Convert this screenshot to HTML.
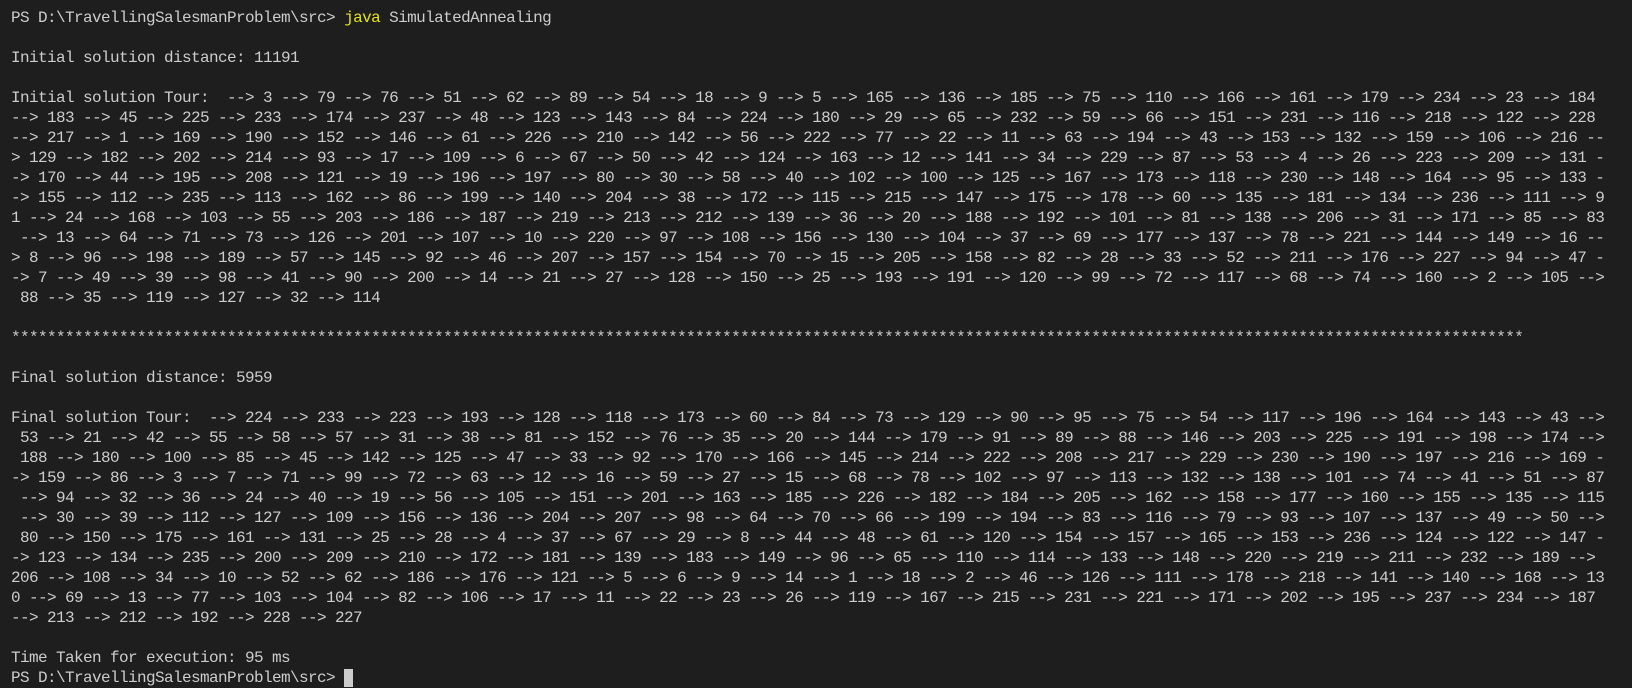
<!DOCTYPE html>
<html>
<head>
<meta charset="utf-8">
<style>
html,body{margin:0;padding:0;background:#1e1e1e;width:1632px;height:670px;overflow:hidden;}
pre{margin:0;position:absolute;left:11px;top:8px;font-family:"Liberation Mono",monospace;font-size:16px;letter-spacing:-0.6px;line-height:20px;color:#cccccc;white-space:pre;}
.y{color:#e5e510;}
.c{display:inline-block;width:9px;height:18px;background:#cccccc;vertical-align:top;margin-top:1px;}
.s{display:inline-block;width:1512px;overflow:hidden;vertical-align:top;height:20px;}
</style>
</head>
<body>
<pre>PS D:\TravellingSalesmanProblem\src&gt; <span class="y">java</span> SimulatedAnnealing

Initial solution distance: 11191

Initial solution Tour:  --&gt; 3 --&gt; 79 --&gt; 76 --&gt; 51 --&gt; 62 --&gt; 89 --&gt; 54 --&gt; 18 --&gt; 9 --&gt; 5 --&gt; 165 --&gt; 136 --&gt; 185 --&gt; 75 --&gt; 110 --&gt; 166 --&gt; 161 --&gt; 179 --&gt; 234 --&gt; 23 --&gt; 184
--&gt; 183 --&gt; 45 --&gt; 225 --&gt; 233 --&gt; 174 --&gt; 237 --&gt; 48 --&gt; 123 --&gt; 143 --&gt; 84 --&gt; 224 --&gt; 180 --&gt; 29 --&gt; 65 --&gt; 232 --&gt; 59 --&gt; 66 --&gt; 151 --&gt; 231 --&gt; 116 --&gt; 218 --&gt; 122 --&gt; 228
--&gt; 217 --&gt; 1 --&gt; 169 --&gt; 190 --&gt; 152 --&gt; 146 --&gt; 61 --&gt; 226 --&gt; 210 --&gt; 142 --&gt; 56 --&gt; 222 --&gt; 77 --&gt; 22 --&gt; 11 --&gt; 63 --&gt; 194 --&gt; 43 --&gt; 153 --&gt; 132 --&gt; 159 --&gt; 106 --&gt; 216 --
&gt; 129 --&gt; 182 --&gt; 202 --&gt; 214 --&gt; 93 --&gt; 17 --&gt; 109 --&gt; 6 --&gt; 67 --&gt; 50 --&gt; 42 --&gt; 124 --&gt; 163 --&gt; 12 --&gt; 141 --&gt; 34 --&gt; 229 --&gt; 87 --&gt; 53 --&gt; 4 --&gt; 26 --&gt; 223 --&gt; 209 --&gt; 131 -
-&gt; 170 --&gt; 44 --&gt; 195 --&gt; 208 --&gt; 121 --&gt; 19 --&gt; 196 --&gt; 197 --&gt; 80 --&gt; 30 --&gt; 58 --&gt; 40 --&gt; 102 --&gt; 100 --&gt; 125 --&gt; 167 --&gt; 173 --&gt; 118 --&gt; 230 --&gt; 148 --&gt; 164 --&gt; 95 --&gt; 133 -
-&gt; 155 --&gt; 112 --&gt; 235 --&gt; 113 --&gt; 162 --&gt; 86 --&gt; 199 --&gt; 140 --&gt; 204 --&gt; 38 --&gt; 172 --&gt; 115 --&gt; 215 --&gt; 147 --&gt; 175 --&gt; 178 --&gt; 60 --&gt; 135 --&gt; 181 --&gt; 134 --&gt; 236 --&gt; 111 --&gt; 9
1 --&gt; 24 --&gt; 168 --&gt; 103 --&gt; 55 --&gt; 203 --&gt; 186 --&gt; 187 --&gt; 219 --&gt; 213 --&gt; 212 --&gt; 139 --&gt; 36 --&gt; 20 --&gt; 188 --&gt; 192 --&gt; 101 --&gt; 81 --&gt; 138 --&gt; 206 --&gt; 31 --&gt; 171 --&gt; 85 --&gt; 83
 --&gt; 13 --&gt; 64 --&gt; 71 --&gt; 73 --&gt; 126 --&gt; 201 --&gt; 107 --&gt; 10 --&gt; 220 --&gt; 97 --&gt; 108 --&gt; 156 --&gt; 130 --&gt; 104 --&gt; 37 --&gt; 69 --&gt; 177 --&gt; 137 --&gt; 78 --&gt; 221 --&gt; 144 --&gt; 149 --&gt; 16 --
&gt; 8 --&gt; 96 --&gt; 198 --&gt; 189 --&gt; 57 --&gt; 145 --&gt; 92 --&gt; 46 --&gt; 207 --&gt; 157 --&gt; 154 --&gt; 70 --&gt; 15 --&gt; 205 --&gt; 158 --&gt; 82 --&gt; 28 --&gt; 33 --&gt; 52 --&gt; 211 --&gt; 176 --&gt; 227 --&gt; 94 --&gt; 47 -
-&gt; 7 --&gt; 49 --&gt; 39 --&gt; 98 --&gt; 41 --&gt; 90 --&gt; 200 --&gt; 14 --&gt; 21 --&gt; 27 --&gt; 128 --&gt; 150 --&gt; 25 --&gt; 193 --&gt; 191 --&gt; 120 --&gt; 99 --&gt; 72 --&gt; 117 --&gt; 68 --&gt; 74 --&gt; 160 --&gt; 2 --&gt; 105 --&gt;
 88 --&gt; 35 --&gt; 119 --&gt; 127 --&gt; 32 --&gt; 114

<span class="s">********************************************************************************************************************************************************************************</span>

Final solution distance: 5959

Final solution Tour:  --&gt; 224 --&gt; 233 --&gt; 223 --&gt; 193 --&gt; 128 --&gt; 118 --&gt; 173 --&gt; 60 --&gt; 84 --&gt; 73 --&gt; 129 --&gt; 90 --&gt; 95 --&gt; 75 --&gt; 54 --&gt; 117 --&gt; 196 --&gt; 164 --&gt; 143 --&gt; 43 --&gt;
 53 --&gt; 21 --&gt; 42 --&gt; 55 --&gt; 58 --&gt; 57 --&gt; 31 --&gt; 38 --&gt; 81 --&gt; 152 --&gt; 76 --&gt; 35 --&gt; 20 --&gt; 144 --&gt; 179 --&gt; 91 --&gt; 89 --&gt; 88 --&gt; 146 --&gt; 203 --&gt; 225 --&gt; 191 --&gt; 198 --&gt; 174 --&gt;
 188 --&gt; 180 --&gt; 100 --&gt; 85 --&gt; 45 --&gt; 142 --&gt; 125 --&gt; 47 --&gt; 33 --&gt; 92 --&gt; 170 --&gt; 166 --&gt; 145 --&gt; 214 --&gt; 222 --&gt; 208 --&gt; 217 --&gt; 229 --&gt; 230 --&gt; 190 --&gt; 197 --&gt; 216 --&gt; 169 -
-&gt; 159 --&gt; 86 --&gt; 3 --&gt; 7 --&gt; 71 --&gt; 99 --&gt; 72 --&gt; 63 --&gt; 12 --&gt; 16 --&gt; 59 --&gt; 27 --&gt; 15 --&gt; 68 --&gt; 78 --&gt; 102 --&gt; 97 --&gt; 113 --&gt; 132 --&gt; 138 --&gt; 101 --&gt; 74 --&gt; 41 --&gt; 51 --&gt; 87
 --&gt; 94 --&gt; 32 --&gt; 36 --&gt; 24 --&gt; 40 --&gt; 19 --&gt; 56 --&gt; 105 --&gt; 151 --&gt; 201 --&gt; 163 --&gt; 185 --&gt; 226 --&gt; 182 --&gt; 184 --&gt; 205 --&gt; 162 --&gt; 158 --&gt; 177 --&gt; 160 --&gt; 155 --&gt; 135 --&gt; 115
 --&gt; 30 --&gt; 39 --&gt; 112 --&gt; 127 --&gt; 109 --&gt; 156 --&gt; 136 --&gt; 204 --&gt; 207 --&gt; 98 --&gt; 64 --&gt; 70 --&gt; 66 --&gt; 199 --&gt; 194 --&gt; 83 --&gt; 116 --&gt; 79 --&gt; 93 --&gt; 107 --&gt; 137 --&gt; 49 --&gt; 50 --&gt;
 80 --&gt; 150 --&gt; 175 --&gt; 161 --&gt; 131 --&gt; 25 --&gt; 28 --&gt; 4 --&gt; 37 --&gt; 67 --&gt; 29 --&gt; 8 --&gt; 44 --&gt; 48 --&gt; 61 --&gt; 120 --&gt; 154 --&gt; 157 --&gt; 165 --&gt; 153 --&gt; 236 --&gt; 124 --&gt; 122 --&gt; 147 -
-&gt; 123 --&gt; 134 --&gt; 235 --&gt; 200 --&gt; 209 --&gt; 210 --&gt; 172 --&gt; 181 --&gt; 139 --&gt; 183 --&gt; 149 --&gt; 96 --&gt; 65 --&gt; 110 --&gt; 114 --&gt; 133 --&gt; 148 --&gt; 220 --&gt; 219 --&gt; 211 --&gt; 232 --&gt; 189 --&gt;
206 --&gt; 108 --&gt; 34 --&gt; 10 --&gt; 52 --&gt; 62 --&gt; 186 --&gt; 176 --&gt; 121 --&gt; 5 --&gt; 6 --&gt; 9 --&gt; 14 --&gt; 1 --&gt; 18 --&gt; 2 --&gt; 46 --&gt; 126 --&gt; 111 --&gt; 178 --&gt; 218 --&gt; 141 --&gt; 140 --&gt; 168 --&gt; 13
0 --&gt; 69 --&gt; 13 --&gt; 77 --&gt; 103 --&gt; 104 --&gt; 82 --&gt; 106 --&gt; 17 --&gt; 11 --&gt; 22 --&gt; 23 --&gt; 26 --&gt; 119 --&gt; 167 --&gt; 215 --&gt; 231 --&gt; 221 --&gt; 171 --&gt; 202 --&gt; 195 --&gt; 237 --&gt; 234 --&gt; 187
--&gt; 213 --&gt; 212 --&gt; 192 --&gt; 228 --&gt; 227

Time Taken for execution: 95 ms
PS D:\TravellingSalesmanProblem\src&gt; <span class="c"></span></pre>
</body>
</html>
